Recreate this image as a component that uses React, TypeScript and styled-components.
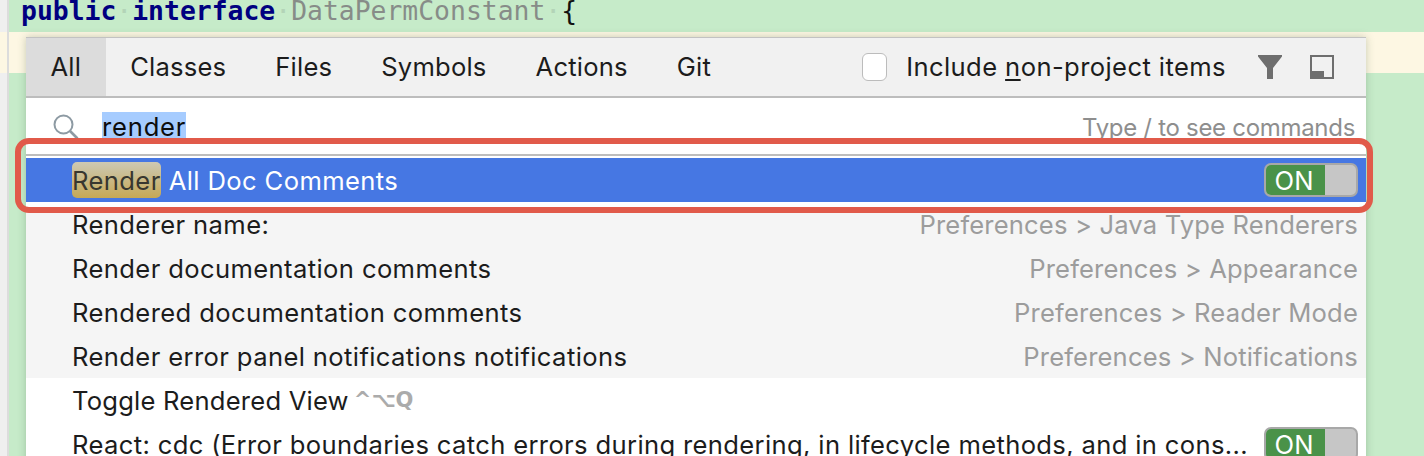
import React from "react";
import styled, { createGlobalStyle } from "styled-components";

const Global = createGlobalStyle`
  html, body { margin: 0; padding: 0; height: 456px; overflow: hidden; background: #c6ebc9; }
  #root { height: 456px; }
  * { box-sizing: border-box; }
`;

const Page = styled.div`
  position: relative;
  display: flex;
  width: 1424px;
  height: 456px;
  overflow: hidden;
  font-family: Inter, "Liberation Sans", sans-serif;
`;

const Gutter = styled.div`
  width: 9px;
  display: flex;
  flex-direction: column;
  background: #efefef;
  border-right: 2px solid #dcdcdc;
`;

const GutterCurrent = styled.div`
  height: 41px;
  margin-top: 32px;
  background: #fdf7e3;
`;

const Editor = styled.div`
  flex: 1;
  display: flex;
  flex-direction: column;
  background: #c6ebc9;
`;

const CodeLine = styled.div`
  height: 32px;
  padding-left: 12px;
  display: flex;
  align-items: flex-start;
  font-family: "DejaVu Sans Mono", "Liberation Mono", monospace;
  font-size: 26.4px;
  line-height: 22px;
  white-space: pre;
  color: #878c88;
`;

const Keyword = styled.span`
  color: #000080;
  font-weight: 700;
`;

const Space = styled.span`
  color: #b3d4b7;
`;

const Brace = styled.span`
  color: #111111;
`;

const CurrentLine = styled.div`
  height: 41px;
  background: #fdf7e3;
`;

const Popup = styled.div`
  position: absolute;
  left: 26px;
  top: 37px;
  width: 1340px;
  display: flex;
  flex-direction: column;
  background: #ffffff;
  border-top: 1px solid #c2c2c2;
  box-shadow: 0 0 8px rgba(60, 90, 60, 0.28);
`;

const Toolbar = styled.div`
  height: 60px;
  display: flex;
  align-items: stretch;
  background: #f1f1f1;
  border-bottom: 2px solid #bdbdbd;
  font-size: 25.6px;
  line-height: 30px;
  color: #1c1c1c;
`;

const Tab = styled.div<{ $active?: boolean }>`
  display: flex;
  align-items: center;
  padding: 0 24.5px;
  letter-spacing: 0.2px;
  background: ${(p) => (p.$active ? "#dcdcdc" : "transparent")};
`;

const Tools = styled.div`
  margin-left: auto;
  display: flex;
  align-items: center;
  padding-right: 32px;
`;

const Checkbox = styled.span`
  width: 25px;
  height: 28px;
  margin-right: 19px;
  background: #ffffff;
  border: 1px solid #bcbcbc;
  border-radius: 6px;
`;

const ToolLabel = styled.span`
  letter-spacing: 0.4px;
`;

const Mnemonic = styled.span`
  text-decoration: underline;
  text-underline-offset: 3px;
  text-decoration-thickness: 2px;
`;

const IconSlot = styled.svg`
  display: block;
  width: 24px;
  height: 24px;
  fill: #6e6e6e;
`;

const FilterSlot = styled(IconSlot)`
  margin-left: 32px;
  margin-right: 28px;
`;

const SearchBar = styled.div`
  height: 58px;
  display: flex;
  align-items: center;
  padding: 0 11px 0 27px;
  background: #ffffff;
  border-bottom: 2px solid #bdbdbd;
`;

const SearchIcon = styled.svg`
  display: block;
  width: 26px;
  height: 26px;
  margin-right: 23px;
  margin-top: 2px;
  fill: none;
  stroke: #8d9aa3;
  stroke-width: 2;
`;

const Query = styled.span`
  background: #a6ccff;
  color: #0d0d0d;
  font-size: 25.6px;
  line-height: 30px;
  letter-spacing: 0.8px;
  margin-top: 2px;
`;

const Hint = styled.span`
  margin-left: auto;
  margin-top: 2px;
  color: #8e8e8e;
  font-size: 24px;
  letter-spacing: -0.3px;
`;

const Results = styled.div`
  padding-top: 2px;
  display: flex;
  flex-direction: column;
`;

const Row = styled.div<{ $selected?: boolean; $tinted?: boolean }>`
  position: relative;
  height: 44px;
  display: flex;
  align-items: center;
  justify-content: space-between;
  padding: 0 8px 0 46px;
  font-size: 25.6px;
  letter-spacing: 0.38px;
  white-space: nowrap;
  color: ${(p) => (p.$selected ? "#ffffff" : "#1c1c1c")};
  background: ${(p) => (p.$selected ? "#4677e3" : p.$tinted ? "#f5f5f5" : "#ffffff")};
  ${(p) => (p.$selected ? "box-shadow: 0 5px 0 #ffffff; z-index: 1;" : "")}
`;

const Label = styled.span`
  display: flex;
  align-items: center;
`;

const ShortcutLabel = styled(Label)`
  letter-spacing: 0.21px;
`;

const LongLabel = styled.span`
  letter-spacing: 0.35px;
`;

const Match = styled.span`
  display: inline-block;
  height: 36px;
  line-height: 38px;
  margin-right: 8px;
  border-radius: 5px;
  color: #38372f;
  background: linear-gradient(180deg, #cdc9b4 0%, #c6a855 100%);
`;

const Where = styled.span`
  color: #9c9c9c;
  letter-spacing: 0.16px;
`;

const Keys = styled.span`
  margin-left: 5px;
  color: #ababab;
  font-size: 21px;
  font-weight: 700;
  letter-spacing: 0;
  font-family: "DejaVu Sans", Inter, sans-serif;
`;

const Toggle = styled.span`
  flex: none;
  width: 94px;
  height: 34px;
  display: flex;
  border: 2px solid #a8a8a8;
  border-radius: 7px;
  background: #c6c6c6;
  overflow: hidden;
`;

const ToggleOn = styled.span`
  width: 59px;
  display: flex;
  align-items: center;
  justify-content: center;
  padding-right: 3px;
  background: #4a9249;
  color: #ffffff;
  font-size: 25.6px;
  letter-spacing: 0;
`;

const Highlight = styled.div`
  position: absolute;
  left: 15px;
  top: 138px;
  width: 1358px;
  height: 75px;
  border: 6px solid #e15a4a;
  border-radius: 14px;
  z-index: 2;
`;

const rows = [
  { label: "Renderer name:", where: "Preferences > Java Type Renderers" },
  { label: "Render documentation comments", where: "Preferences > Appearance" },
  { label: "Rendered documentation comments", where: "Preferences > Reader Mode" },
  { label: "Render error panel notifications notifications", where: "Preferences > Notifications" },
];

export default function App() {
  return (
    <Page>
      <Global />
      <Gutter>
        <GutterCurrent />
      </Gutter>
      <Editor>
        <CodeLine>
          <Keyword>public</Keyword>
          <Space>·</Space>
          <Keyword>interface</Keyword>
          <Space>·</Space>
          DataPermConstant
          <Space>·</Space>
          <Brace>{"{"}</Brace>
        </CodeLine>
        <CurrentLine />
      </Editor>
      <Popup>
        <Toolbar>
          <Tab $active>All</Tab>
          <Tab>Classes</Tab>
          <Tab>Files</Tab>
          <Tab>Symbols</Tab>
          <Tab>Actions</Tab>
          <Tab>Git</Tab>
          <Tools>
            <Checkbox />
            <ToolLabel>
              Include <Mnemonic>n</Mnemonic>on-project items
            </ToolLabel>
            <FilterSlot viewBox="0 0 24 24">
              <path d="M0 0H24V1.5L15 13V24H9V13L0 1.5Z" />
            </FilterSlot>
            <IconSlot viewBox="0 0 24 24">
              <path d="M0 0H24V24H0ZM2 2V22H22V2Z" fillRule="evenodd" />
              <path d="M0 16H14V24H0Z" />
            </IconSlot>
          </Tools>
        </Toolbar>
        <SearchBar>
          <SearchIcon viewBox="0 0 26 26">
            <circle cx="10.5" cy="10.5" r="9" />
            <path d="M17 17L24.5 24.5" strokeWidth="2.6" />
          </SearchIcon>
          <Query>render</Query>
          <Hint>Type / to see commands</Hint>
        </SearchBar>
        <Results>
          <Row $selected>
            <Label>
              <Match>Render</Match>All Doc Comments
            </Label>
            <Toggle>
              <ToggleOn>ON</ToggleOn>
            </Toggle>
          </Row>
          {rows.map((r) => (
            <Row $tinted key={r.label}>
              <span>{r.label}</span>
              <Where>{r.where}</Where>
            </Row>
          ))}
          <Row>
            <ShortcutLabel>
              Toggle Rendered View<Keys>^⌥Q</Keys>
            </ShortcutLabel>
          </Row>
          <Row>
            <LongLabel>React: cdc (Error boundaries catch errors during rendering, in lifecycle methods, and in cons...</LongLabel>
            <Toggle>
              <ToggleOn>ON</ToggleOn>
            </Toggle>
          </Row>
        </Results>
      </Popup>
      <Highlight />
    </Page>
  );
}
